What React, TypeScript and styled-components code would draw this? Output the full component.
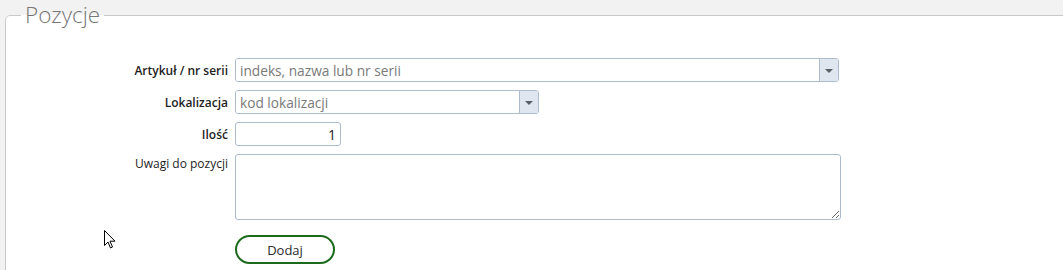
import React from "react";
import styled, { createGlobalStyle } from "styled-components";

const Global = createGlobalStyle`
  html, body { margin: 0; padding: 0; }
  body {
    background: #f2f2f2;
    font-family: "Open Sans", "Liberation Sans", sans-serif;
    overflow: hidden;
    width: 1063px;
    height: 270px;
  }
`;

const Page = styled.div`
  position: relative;
  padding-left: 5px;
  height: 270px;
  overflow: hidden;
`;

const Fieldset = styled.fieldset`
  margin: 0 -20px 0 0;
  border: 1px solid #c9c9c9;
  border-radius: 5px 0 0 0;
  background: #fff;
  padding: 28px 0 20px 15px;
`;

const Legend = styled.legend`
  padding: 0 4px;
  font-family: "Open Sans", sans-serif;
  font-weight: 300;
  font-size: 22.5px;
  line-height: 30px;
  color: #757575;
`;

const Form = styled.div`
  display: grid;
  grid-template-columns: 207px auto;
  column-gap: 7px;
  row-gap: 8px;
  justify-items: start;
  align-items: center;
`;

const Label = styled.label<{ $bold?: boolean; $top?: boolean }>`
  justify-self: end;
  align-self: ${(p) => (p.$top ? "start" : "center")};
  margin-top: ${(p) => (p.$top ? "1px" : "0")};
  font-family: "Open Sans", sans-serif;
  font-size: 12px;
  font-weight: ${(p) => (p.$bold ? 600 : 400)};
  color: #1e1e1e;
`;

const Combo = styled.div<{ $w: number }>`
  display: flex;
  width: ${(p) => p.$w}px;
  height: 24px;
  box-sizing: border-box;
  border: 1px solid #aebdcd;
  border-radius: 3px;
  overflow: hidden;
  background: #fff;
`;

const ComboInput = styled.input`
  flex: 1;
  min-width: 0;
  border: none;
  outline: none;
  padding: 0 4px;
  font-family: "Open Sans", sans-serif;
  font-size: 13.7px;
  color: #222;
  &::placeholder { color: #7a7a7a; }
`;

const ComboButton = styled.span`
  width: 18px;
  border-left: 1px solid #aebdcd;
  background: #dfe6ef;
  display: flex;
  align-items: center;
  justify-content: center;
  &::after {
    content: "";
    border-left: 4px solid transparent;
    border-right: 4px solid transparent;
    border-top: 4px solid #5a5f66;
    margin-top: 1px;
  }
`;

const NumberInput = styled.input`
  width: 106px;
  height: 24px;
  box-sizing: border-box;
  border: 1px solid #aebdcd;
  border-radius: 3px;
  text-align: right;
  padding: 0 4px;
  font-family: "Open Sans", sans-serif;
  font-size: 14px;
  color: #222;
  outline: none;
`;

const TextArea = styled.textarea`
  width: 606px;
  height: 66px;
  box-sizing: border-box;
  border: 1px solid #aebdcd;
  border-radius: 3px;
  font-family: "Open Sans", sans-serif;
  font-size: 14px;
  outline: none;
  margin: 0;
  display: block;
`;

const Button = styled.button`
  grid-column: 2;
  margin-top: 7px;
  width: 100px;
  height: 29px;
  box-sizing: border-box;
  border: 2px solid #1c6a1c;
  border-radius: 15px;
  background: #fff;
  font-family: "Open Sans", sans-serif;
  font-size: 13px;
  font-weight: 400;
  color: #2a2a2a;
  cursor: pointer;
`;

const Cursor = styled.svg`
  position: absolute;
  left: 104px;
  top: 230px;
`;

export default function App() {
  return (
    <>
      <Global />
      <Page>
        <Fieldset>
          <Legend>Pozycje</Legend>
          <Form>
            <Label $bold>Artykuł / nr serii</Label>
            <Combo $w={604}>
              <ComboInput placeholder="indeks, nazwa lub nr serii" />
              <ComboButton />
            </Combo>
            <Label $bold>Lokalizacja</Label>
            <Combo $w={304}>
              <ComboInput placeholder="kod lokalizacji" />
              <ComboButton />
            </Combo>
            <Label $bold>Ilość</Label>
            <NumberInput defaultValue="1" />
            <Label $top>Uwagi do pozycji</Label>
            <TextArea />
            <Button>Dodaj</Button>
          </Form>
        </Fieldset>
        <Cursor width="12" height="19" viewBox="0 0 12 19">
          <path d="M0.5 0.5 L0.5 15.5 L4 12 L6.5 18 L8.5 17 L6 11.2 L11 11.2 Z" fill="#fff" stroke="#000" strokeWidth="1" strokeLinejoin="round" />
        </Cursor>
      </Page>
    </>
  );
}
